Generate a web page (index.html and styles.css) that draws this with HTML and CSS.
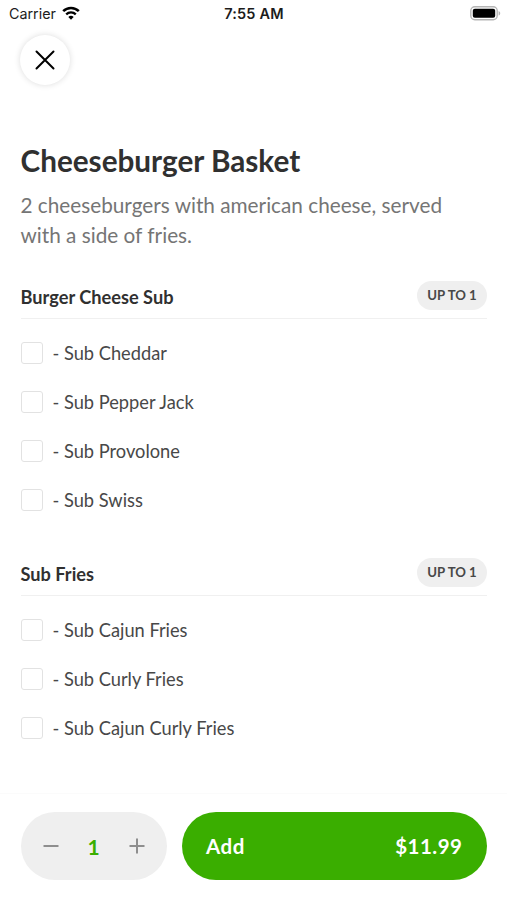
FILE: index.html
```html
<!DOCTYPE html>
<html lang="en">
<head>
  <meta charset="UTF-8">
  <meta name="viewport" content="width=device-width, initial-scale=1.0">
  <title>Cheeseburger Basket</title>
  <link rel="stylesheet" href="styles.css">
</head>
<body>
  <div class="screen">
    <header class="status-bar">
      <div class="carrier">
        <span class="carrier-name">Carrier</span>
        <svg class="wifi" width="18" height="14" viewBox="0 0 18 14">
          <path d="M1.2 5.1a11.2 11.2 0 0 1 15.6 0" fill="none" stroke="#000" stroke-width="2.6"/>
          <path d="M4.2 8.3a6.9 6.9 0 0 1 9.6 0" fill="none" stroke="#000" stroke-width="2.3"/>
          <path d="M9 13.8 6.3 11a3.9 3.9 0 0 1 5.4 0z" fill="#000"/>
        </svg>
      </div>
      <div class="clock">7:55 AM</div>
      <svg class="battery" width="31" height="15" viewBox="0 0 31 15">
        <rect x=".8" y=".8" width="26.4" height="13" rx="4" fill="#fff" stroke="#b5b5b5" stroke-width="1.4"/>
        <rect x="2.8" y="2.8" width="22.4" height="9" rx="2" fill="#000"/>
        <path d="M28.6 5v4.6c2.2-.8 2.2-3.8 0-4.6z" fill="#b5b5b5"/>
      </svg>
    </header>

    <button class="close" aria-label="Close">
      <svg width="20" height="20" viewBox="0 0 20 20">
        <path d="M1.5 1.5l17 17M18.5 1.5l-17 17" fill="none" stroke="#000" stroke-width="2" stroke-linecap="round"/>
      </svg>
    </button>

    <main class="content">
      <h1 class="title">Cheeseburger Basket</h1>
      <p class="description">2 cheeseburgers with american cheese, served with a side of fries.</p>

      <section class="group">
        <div class="group-header">
          <h2 class="group-title">Burger Cheese Sub</h2>
          <span class="limit">UP TO 1</span>
        </div>
        <label class="option"><input type="checkbox" class="box"><span class="option-name">- Sub Cheddar</span></label>
        <label class="option"><input type="checkbox" class="box"><span class="option-name">- Sub Pepper Jack</span></label>
        <label class="option"><input type="checkbox" class="box"><span class="option-name">- Sub Provolone</span></label>
        <label class="option"><input type="checkbox" class="box"><span class="option-name">- Sub Swiss</span></label>
      </section>

      <section class="group">
        <div class="group-header">
          <h2 class="group-title">Sub Fries</h2>
          <span class="limit">UP TO 1</span>
        </div>
        <label class="option"><input type="checkbox" class="box"><span class="option-name">- Sub Cajun Fries</span></label>
        <label class="option"><input type="checkbox" class="box"><span class="option-name">- Sub Curly Fries</span></label>
        <label class="option"><input type="checkbox" class="box"><span class="option-name">- Sub Cajun Curly Fries</span></label>
      </section>
    </main>

    <footer class="footer">
      <div class="quantity">
        <button class="step" aria-label="Decrease">
          <svg width="16" height="16" viewBox="0 0 16 16"><path d="M.5 8h15" stroke="#8e8e8e" stroke-width="2"/></svg>
        </button>
        <span class="count">1</span>
        <button class="step" aria-label="Increase">
          <svg width="16" height="16" viewBox="0 0 16 16"><path d="M.5 8h15M8 .5v15" stroke="#8e8e8e" stroke-width="2"/></svg>
        </button>
      </div>
      <button class="add">
        <span>Add</span>
        <span class="price">$11.99</span>
      </button>
    </footer>
  </div>
</body>
</html>
```
FILE: styles.css
```css
* {
  box-sizing: border-box;
}

body {
  margin: 0;
  background: #fff;
  color: #303030;
  font-family: Lato, sans-serif;
}

button {
  padding: 0;
  border: none;
  font-family: inherit;
  cursor: pointer;
}

svg {
  display: block;
}

.screen {
  display: flex;
  flex-direction: column;
  height: 900px;
  overflow: hidden;
}

.status-bar {
  display: grid;
  grid-template-columns: 1fr auto 1fr;
  align-items: center;
  height: 27px;
  padding: 0 6px 0 9px;
  font-family: Inter, sans-serif;
  font-size: 14.5px;
  color: #1c1c1c;
}

.carrier {
  display: flex;
  align-items: center;
  gap: 6px;
  font-size: 14.3px;
}

.wifi {
  margin-top: -2px;
}

.clock {
  margin-right: 2px;
  font-weight: 600;
  letter-spacing: 0.15px;
}

.battery {
  justify-self: end;
}

.close {
  display: flex;
  align-items: center;
  justify-content: center;
  width: 50px;
  height: 50px;
  margin: 8px 0 0 20px;
  border-radius: 50%;
  background: #fff;
  box-shadow: 0 0 6px rgba(0, 0, 0, 0.14);
}

.content {
  flex: 1;
  padding: 58px 20px 0 20.5px;
}

.title {
  margin: 0;
  font-size: 29.7px;
  line-height: 36px;
  font-weight: 700;
}

.description {
  margin: 12px 0 0;
  font-size: 20.75px;
  line-height: 29.5px;
  color: #757575;
}

.group {
  margin-top: 31px;
}

.group + .group {
  margin-top: 33.8px;
}

.group-header {
  display: flex;
  align-items: flex-start;
  justify-content: space-between;
  height: 38px;
  margin-bottom: 9.8px;
  border-bottom: 1px solid #f0f0f0;
}

.group-title {
  margin: 0;
  font-size: 18.2px;
  line-height: 32px;
  font-weight: 700;
}

.limit {
  width: 70px;
  border-radius: 15px;
  background: #efefef;
  font-size: 13.2px;
  line-height: 29px;
  font-weight: 700;
  text-align: center;
  color: #484848;
}

.option {
  display: flex;
  align-items: center;
  gap: 10px;
  height: 48.9px;
  font-size: 18.25px;
  color: #484848;
}

.box {
  appearance: none;
  width: 22px;
  height: 22px;
  margin: 0;
  border: 1.5px solid #e2e2e2;
  border-radius: 3px;
}

.footer {
  display: flex;
  gap: 15px;
  height: 107px;
  padding: 18px 20px 20px 20.5px;
  border-top: 1px solid #fbfbfb;
}

.quantity {
  display: flex;
  align-items: center;
  justify-content: space-between;
  width: 146px;
  padding: 0 22px;
  border-radius: 34px;
  background: #efefef;
}

.step {
  background: none;
}

.count {
  font-size: 21px;
  font-weight: 700;
  color: #3aae00;
}

.add {
  display: flex;
  flex: 1;
  align-items: center;
  justify-content: space-between;
  padding: 0 24.5px;
  border-radius: 34px;
  background: #3aae00;
  color: #fff;
  font-size: 20.5px;
  font-weight: 700;
  letter-spacing: 0.5px;
}
```
